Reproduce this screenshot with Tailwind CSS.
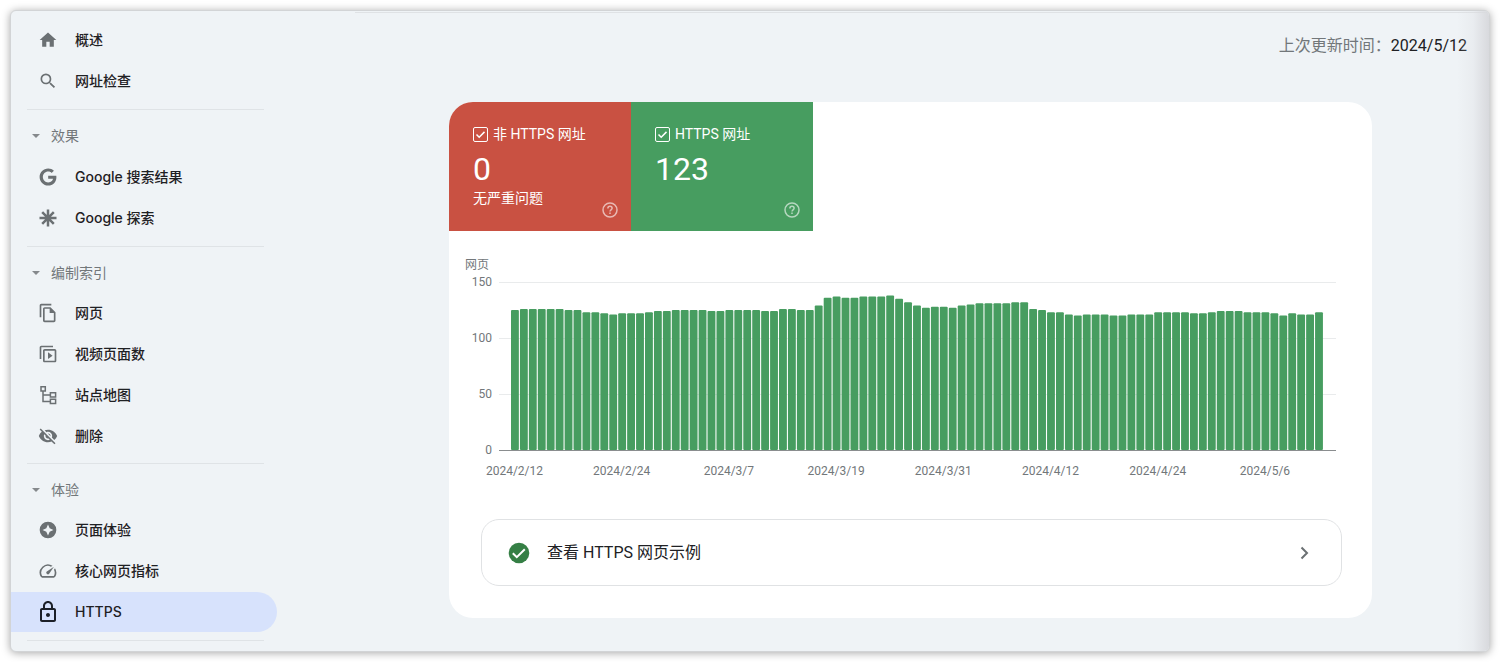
<!DOCTYPE html>
<html lang="zh-CN">
<head>
<meta charset="utf-8">
<meta name="viewport" content="width=device-width, initial-scale=1">
<title>HTTPS</title>
<script src="https://cdn.jsdelivr.net/npm/@tailwindcss/browser@4"></script>
</head>
<body class="flex min-h-screen bg-white p-[10px] font-['Roboto','Noto_Sans_CJK_SC',sans-serif] text-[#202124]">
<div class="flex flex-1 overflow-hidden rounded-md border border-[#d2d4d6] bg-[#eff3f6] shadow-[0_1px_9px_rgba(0,0,0,0.35)]">

  <nav class="w-[266px] shrink-0 pt-[9px] font-['Inter','Noto_Sans_CJK_SC',sans-serif] text-sm font-medium text-[#1f2124]" aria-label="导航">
    <ul class="flex flex-col gap-px">
      <li><a href="#" class="flex h-10 items-center pl-[27px]">
        <svg class="mr-[17px] size-5 fill-[#6b7073]" viewBox="0 0 24 24"><path d="M10 20v-6h4v6h5v-8h3L12 3 2 12h3v8z"/></svg>概述</a></li>
      <li><a href="#" class="flex h-10 items-center pl-[27px]">
        <svg class="mr-[17px] size-5 fill-[#6b7073]" viewBox="0 0 24 24"><path d="M15.500 14h-.79l-.28-.27A6.471 6.471 0 0 0 16 9.500 6.500 6.500 0 1 0 9.500 16c1.610 0 3.090-.59 4.230-1.570l.27.28v.79l5 4.990L20.490 19l-4.990-5zm-6 0C7.010 14 5 11.990 5 9.500S7.010 5 9.500 5 14 7.010 14 9.500 11.990 14 9.500 14z"/></svg>网址检查</a></li>
    </ul>

    <hr class="mt-2 mb-[6px] ml-4 mr-[13px] border-[#dfe3e6]">
    <button type="button" aria-expanded="true" class="flex h-10 w-full items-center pl-[21px] font-normal text-[#72777a]">
      <svg class="mr-[11px] h-1 w-2 fill-[#85898c]" viewBox="0 0 8 4"><path d="M0 0h8L4 4z"/></svg>效果</button>
    <ul class="flex flex-col gap-px pt-px">
      <li><a href="#" class="flex h-10 items-center pl-[27px]">
        <svg class="mr-[17px] size-5 fill-[#6b7073]" viewBox="-2 -2 28 28"><path d="M12.240 10.285V14.400h6.806c-.275 1.765-2.056 5.174-6.806 5.174-4.095 0-7.439-3.389-7.439-7.574s3.345-7.574 7.439-7.574c2.330 0 3.891.989 4.785 1.849l3.254-3.138C18.189 1.186 15.479 0 12.240 0c-6.635 0-12 5.365-12 12s5.365 12 12 12c6.926 0 11.520-4.869 11.520-11.726 0-.788-.085-1.390-.189-1.989H12.240z"/></svg>Google 搜索结果</a></li>
      <li><a href="#" class="flex h-10 items-center pl-[27px]">
        <svg class="mr-[17px] size-5 stroke-[#6b7073] stroke-[2.5]" viewBox="0 0 20 20"><path d="M10 1.500v17M1.500 10h17M4.200 4.200l11.600 11.600M15.800 4.200L4.200 15.800"/></svg>Google 探索</a></li>
    </ul>

    <hr class="mt-2 mb-[6px] ml-4 mr-[13px] border-[#dfe3e6]">
    <button type="button" aria-expanded="true" class="flex h-10 w-full items-center pl-[21px] font-normal text-[#72777a]">
      <svg class="mr-[11px] h-1 w-2 fill-[#85898c]" viewBox="0 0 8 4"><path d="M0 0h8L4 4z"/></svg>编制索引</button>
    <ul class="flex flex-col gap-px">
      <li><a href="#" class="flex h-10 items-center pl-[27px]">
        <svg class="mr-[17px] size-5 fill-[#6b7073]" viewBox="0 0 24 24"><path d="M16 1H4c-1.100 0-2 .9-2 2v14h2V3h12V1zm-1 4H8c-1.100 0-1.990.9-1.990 2L6 21c0 1.100.89 2 1.990 2H19c1.100 0 2-.9 2-2V11l-6-6zM8 21V7h6v5h5v9H8z"/></svg>网页</a></li>
      <li><a href="#" class="flex h-10 items-center pl-[27px]">
        <svg class="mr-[17px] size-5 fill-[#6b7073]" viewBox="0 0 24 24"><path d="M18 2H4c-1.100 0-2 .9-2 2v14h2V4h14V2zm2 4H8c-1.100 0-2 .9-2 2v12c0 1.100.9 2 2 2h12c1.100 0 2-.9 2-2V8c0-1.100-.9-2-2-2zm0 14H8V8h12v12zM12 10v8l5.500-4z"/></svg>视频页面数</a></li>
      <li><a href="#" class="flex h-10 items-center pl-[27px]">
        <svg class="mr-[17px] size-5 fill-none stroke-[#6b7073] stroke-[1.5]" viewBox="0 0 20 20"><path d="M3 1.700h4.300V6H3zM12.400 7.800h5.200v4.200h-5.200zM12.400 14.300h5.200v4.200h-5.200zM5 6v10.400h7.400M5 9.900h7.400"/></svg>站点地图</a></li>
      <li><a href="#" class="flex h-10 items-center pl-[27px]">
        <svg class="mr-[17px] size-5 fill-[#6b7073]" viewBox="0 0 24 24"><path d="M12 7c2.760 0 5 2.240 5 5 0 .65-.13 1.260-.36 1.830l2.920 2.920c1.510-1.260 2.700-2.890 3.430-4.750-1.730-4.390-6-7.500-11-7.500-1.400 0-2.740.25-3.980.7l2.160 2.160C10.740 7.130 11.350 7 12 7zM2 4.270l2.280 2.280.46.46C3.080 8.300 1.780 10.020 1 12c1.730 4.390 6 7.500 11 7.500 1.550 0 3.030-.3 4.380-.84l.42.42L19.730 22 21 20.730 3.270 3 2 4.270zM7.530 9.800l1.550 1.550c-.05.21-.08.43-.08.65 0 1.660 1.340 3 3 3 .22 0 .44-.03.65-.08l1.550 1.550c-.67.33-1.410.53-2.200.53-2.760 0-5-2.240-5-5 0-.79.2-1.530.53-2.200zm4.310-.78l3.150 3.150.02-.16c0-1.660-1.340-3-3-3l-.17.01z"/></svg>删除</a></li>
    </ul>

    <hr class="mt-[7px] mb-[6px] ml-4 mr-[13px] border-[#dfe3e6]">
    <button type="button" aria-expanded="true" class="flex h-10 w-full items-center pl-[21px] font-normal text-[#72777a]">
      <svg class="mr-[11px] h-1 w-2 fill-[#85898c]" viewBox="0 0 8 4"><path d="M0 0h8L4 4z"/></svg>体验</button>
    <ul class="flex flex-col gap-px">
      <li><a href="#" class="flex h-10 items-center pl-[27px]">
        <svg class="mr-[17px] size-5 fill-[#6b7073]" viewBox="0 0 24 24"><path fill-rule="evenodd" d="M12 2a10 10 0 1 0 0 20 10 10 0 0 0 0-20zm0 3.500l2 4.500 4.500 2-4.500 2-2 4.500-2-4.500-4.500-2 4.500-2z"/></svg>页面体验</a></li>
      <li><a href="#" class="flex h-10 items-center pl-[27px]">
        <svg class="mr-[17px] size-5 fill-[#6b7073]" viewBox="0 0 24 24"><path d="M20.380 8.570l-1.230 1.850a8 8 0 0 1-.22 7.580H5.070A8 8 0 0 1 15.580 6.850l1.850-1.230A10 10 0 0 0 3.350 19a2 2 0 0 0 1.720 1h13.850a2 2 0 0 0 1.740-1 10 10 0 0 0-.27-10.440zm-9.790 6.840a2 2 0 0 0 2.830 0l5.660-8.490-8.490 5.660a2 2 0 0 0 0 2.830z"/></svg>核心网页指标</a></li>
      <li><a href="#" aria-current="page" class="flex h-10 w-full items-center rounded-r-full bg-[#d7e2fc] pl-[25px]">
        <svg class="mr-[15px] size-6 fill-[#1c2028]" viewBox="0 0 24 24"><path d="M18 8h-1V6c0-2.760-2.240-5-5-5S7 3.240 7 6v2H6c-1.100 0-2 .9-2 2v10c0 1.100.9 2 2 2h12c1.100 0 2-.9 2-2V10c0-1.100-.9-2-2-2zM9 6c0-1.660 1.340-3 3-3s3 1.340 3 3v2H9V6zm9 14H6V10h12v10zm-6-3c1.100 0 2-.9 2-2s-.9-2-2-2-2 .9-2 2 .9 2 2 2z"/></svg>HTTPS</a></li>
    </ul>
    <hr class="mt-2 ml-4 mr-[13px] border-[#dfe3e6]">
  </nav>

  <div class="flex min-w-0 flex-1 flex-col">
    <hr class="mt-px ml-[78px] border-[#dfe2e5]">
    <p class="flex justify-end pt-[21px] pr-[22px] text-base text-[#72777a]">
      <span>上次更新时间：</span><time datetime="2024-05-12" class="text-[#202124]">2024/5/12</time>
    </p>

    <main class="mt-11 mr-[117px] mb-8 ml-[172px] overflow-hidden rounded-3xl bg-white pb-8">
      <div class="flex text-sm text-white">
        <section class="flex h-[129px] w-[182px] flex-col bg-[#c95142] pt-[22px] pl-6">
          <label class="flex h-5 items-center gap-[5px]">
            <span class="grid size-[15px]">
              <input type="checkbox" checked class="peer col-start-1 row-start-1 size-[15px] appearance-none rounded-xs border-[1.5px] border-white">
              <svg class="pointer-events-none col-start-1 row-start-1 hidden size-[15px] fill-none stroke-white stroke-[1.5] peer-checked:block" viewBox="0 0 15 15"><path d="M3.500 7.500l2.700 2.700 5.300-5.300"/></svg>
            </span>非 HTTPS 网址</label>
          <strong class="mt-[5px] text-[32px] leading-10 font-normal">0</strong>
          <div class="flex">
            <span class="flex-1 leading-[18px]">无严重问题</span>
            <button type="button" aria-label="帮助" class="mt-[13px] mr-[13px] size-4 opacity-60">
              <svg class="size-4 fill-none stroke-white stroke-[1.5]" viewBox="0 0 16 16"><circle cx="8" cy="8" r="7"/><path d="M5.900 6.400c0-1.200.9-2.100 2.100-2.100s2.100.9 2.100 2c0 1.500-2.100 1.700-2.100 3.300M8 10.600V12"/></svg>
            </button>
          </div>
        </section>
        <section class="flex h-[129px] w-[182px] flex-col bg-[#479d60] pt-[22px] pl-6">
          <label class="flex h-5 items-center gap-[5px]">
            <span class="grid size-[15px]">
              <input type="checkbox" checked class="peer col-start-1 row-start-1 size-[15px] appearance-none rounded-xs border-[1.5px] border-white">
              <svg class="pointer-events-none col-start-1 row-start-1 hidden size-[15px] fill-none stroke-white stroke-[1.5] peer-checked:block" viewBox="0 0 15 15"><path d="M3.500 7.500l2.700 2.700 5.300-5.300"/></svg>
            </span>HTTPS 网址</label>
          <strong class="mt-[5px] text-[32px] leading-10 font-normal">123</strong>
          <div class="flex justify-end">
            <button type="button" aria-label="帮助" class="mt-[13px] mr-[13px] size-4 opacity-60">
              <svg class="size-4 fill-none stroke-white stroke-[1.5]" viewBox="0 0 16 16"><circle cx="8" cy="8" r="7"/><path d="M5.900 6.400c0-1.200.9-2.100 2.100-2.100s2.100.9 2.100 2c0 1.500-2.100 1.700-2.100 3.300M8 10.600V12"/></svg>
            </button>
          </div>
        </section>
      </div>

      <section class="mt-[26px] pr-9 pl-4 text-xs text-[#72777a]" aria-label="网页">
        <h2 class="leading-4">网页</h2>
        <div class="mt-px flex">
          <div class="flex h-[184px] w-[27px] flex-col justify-between text-right leading-4">
            <span>150</span><span>100</span><span>50</span><span>0</span>
          </div>
          <div class="my-2 ml-[7px] grid h-[169px] flex-1">
            <div class="col-start-1 row-start-1 flex flex-col justify-between">
              <i class="h-px bg-[#e9ebec]"></i><i class="h-px bg-[#e9ebec]"></i><i class="h-px bg-[#e9ebec]"></i><i class="h-px bg-[#8a8d8f]"></i>
            </div>
            <div class="col-start-1 row-start-1 px-3">
              <svg id="bars" class="h-[168px] w-full fill-[#479d60]" role="img" aria-label="HTTPS 网址"></svg>
            </div>
          </div>
        </div>
        <div id="days" class="mt-1 mr-[13px] ml-[45px] grid h-4 grid-cols-[repeat(91,minmax(0,1fr))] leading-4"></div>
      </section>

      <a href="#" class="mt-10 mr-[30px] ml-8 flex h-[67px] items-center rounded-[18px] border border-[#e0e2e4] pr-[27px] pl-[25px] text-base">
        <svg class="mr-[16px] size-6" viewBox="0 0 24 24"><circle cx="12" cy="12" r="10.300" class="fill-[#357f45]"/><path d="M5.800 12.200l4 4 8-8" class="fill-none stroke-white stroke-2"/></svg>
        <span class="flex-1">查看 HTTPS 网页示例</span>
        <svg class="size-5 fill-none stroke-[#6b7073] stroke-2" viewBox="0 0 20 20"><path d="M7.500 4.500L13 10l-5.500 5.500"/></svg>
      </a>
    </main>
  </div>

  <div class="pointer-events-none -ml-8 w-8 shrink-0 bg-linear-to-r from-[#d8d9dd]/0 via-[#d8d9dd]/25 to-[#d8d9dd]"></div>
</div>

<script>
  // Daily counts of HTTPS pages, from 2024/2/12 to 2024/5/12.
  const counts = [
    125,126,126,126,126,126,125,125,123,123,122,121,122,122,122,123,124,124,125,125,125,125,124,124,125,125,125,125,124,124,
    126,126,125,125,129,136,137,136,136,137,137,137,138,135,132,129,127,128,128,127,129,130,131,131,131,131,132,132,126,125,
    123,123,121,120,121,121,121,120,120,121,121,121,123,123,123,123,122,122,123,124,124,124,123,123,123,122,120,122,121,121,123
  ];
  const step = 100 / counts.length;
  document.getElementById('bars').innerHTML = counts.map((n, i) => {
    const h = n * 168 / 150;
    return `<rect x="${i * step}%" width="${step * 0.88}%" y="${168 - h}" height="${h}" rx="1"/>`;
  }).join('');

  const days = ['2024/2/12', '2024/2/24', '2024/3/7', '2024/3/19', '2024/3/31', '2024/4/12', '2024/4/24', '2024/5/6'];
  document.getElementById('days').innerHTML = days.map((d, i) =>
    `<span class="flex justify-center whitespace-nowrap" style="grid-column:${1 + 12 * i}">${d}</span>`).join('');
</script>
</body>
</html>
